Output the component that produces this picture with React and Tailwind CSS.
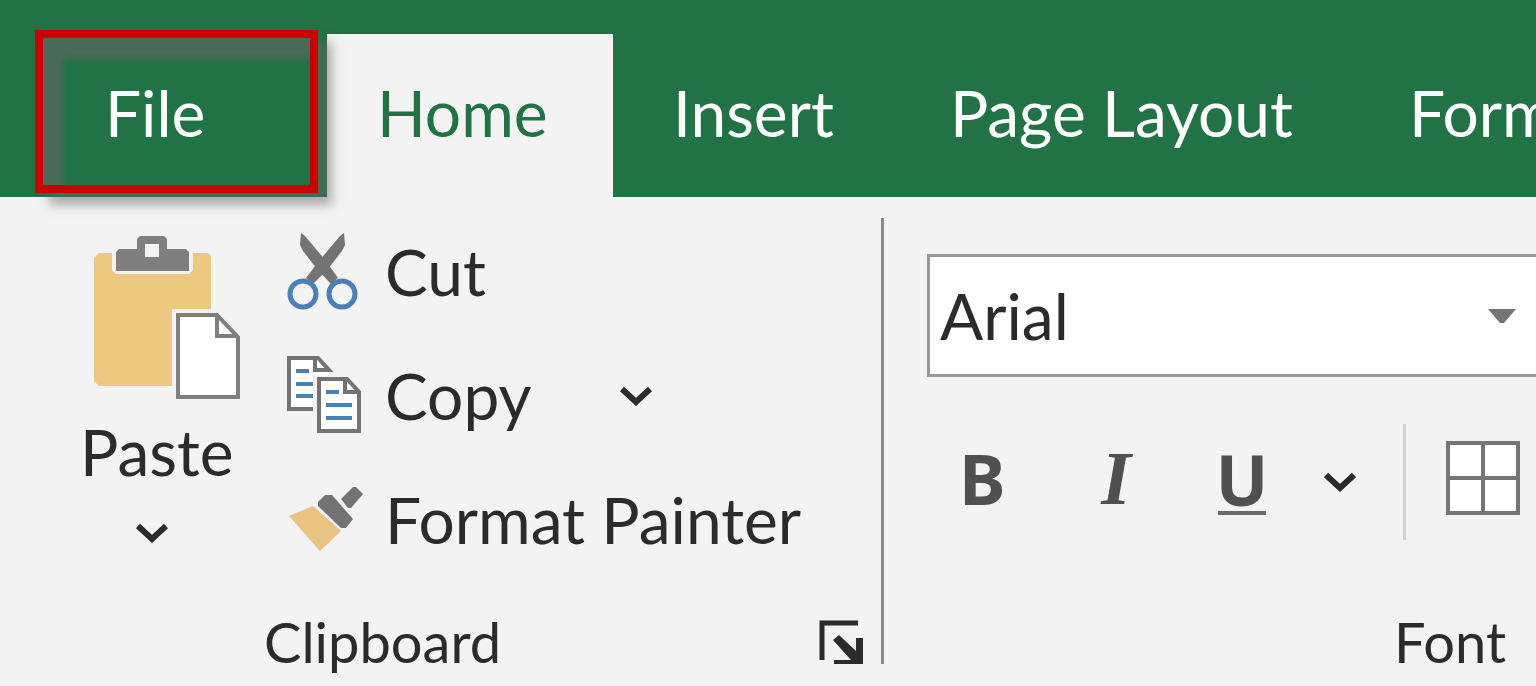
import { useState } from 'react';

const tabs = [
  { name: 'Home', pad: 'w-[286px] pl-[50px]' },
  { name: 'Insert', pad: 'pl-[60px] pr-14' },
  { name: 'Page Layout', pad: 'pl-[60px] pr-14' },
  { name: 'Formulas', pad: 'pl-[60px] pr-14' },
];

function Chevron() {
  return (
    <svg width="34" height="22" viewBox="0 0 34 22" fill="none" aria-hidden="true">
      <path d="M3 4 L17 17 L31 4" stroke="#2b2b2b" strokeWidth="6" />
    </svg>
  );
}

function PasteIcon() {
  return (
    <svg width="148" height="164" viewBox="0 0 148 164" aria-hidden="true">
      <path d="M5 17 H18 V34 L22 38 H95 L99 34 V17 H112 Q117 17 117 22 V73 H78 V150 H5 L0 145 V22 Z" fill="#edc87f" />
      <path fillRule="evenodd" d="M22 16 L25 13 H43 V3 L46 0 H70 L73 3 V13 H92 L95 16 V35 H22 Z M51 8 V21 H65 V8 Z" fill="#7f7f7f" />
      <path d="M84 79 H123 L144 101 V161 H84 Z" fill="#fff" stroke="#7f7f7f" strokeWidth="4" />
      <path d="M123 79 V100 H144" fill="none" stroke="#7f7f7f" strokeWidth="4" />
    </svg>
  );
}

function CutIcon() {
  return (
    <svg width="72" height="78" viewBox="0 0 72 78" aria-hidden="true">
      <path d="M14 0 L18 3 L39 28 L51 45 L44 51 L30 36 L16 18 L13 12 Z" fill="#737373" />
      <path d="M57 0 L53 3 L32 28 L19 45 L26 51 L41 36 L55 18 L58 12 Z" fill="#737373" />
      <circle cx="16" cy="61" r="13" fill="#f3f3f3" stroke="#4a80b8" strokeWidth="5" />
      <circle cx="55" cy="61" r="13" fill="#f3f3f3" stroke="#4a80b8" strokeWidth="5" />
    </svg>
  );
}

function CopyIcon() {
  return (
    <svg width="76" height="80" viewBox="0 0 76 80" aria-hidden="true">
      <path d="M2 2 H30 L42 14 V53 H2 Z" fill="#fff" />
      <path d="M26 53 H2 V2 H31 L42 14 H28 V2" fill="none" stroke="#737373" strokeWidth="4" />
      <path d="M9 15 H22 M9 28 H26 M9 40 H26" stroke="#4a80b8" strokeWidth="4" />
      <path d="M26 19 H62 L76 33 V79 H26 Z" fill="#f3f3f3" />
      <path d="M32 23 H60 L72 36 V75 H32 Z" fill="#fff" stroke="#737373" strokeWidth="4" />
      <path d="M58 23 V36 H72" fill="none" stroke="#737373" strokeWidth="4" />
      <path d="M39 36 H52 M39 49 H65 M39 62 H65" stroke="#4a80b8" strokeWidth="4" />
    </svg>
  );
}

function PainterIcon() {
  return (
    <svg width="78" height="68" viewBox="0 0 78 68" aria-hidden="true">
      <path d="M2 30 L26 20 L54 45 L33 65 Z" fill="#eac282" />
      <path d="M31 16 L38 9 H45 L66 33 L59 42 H54 L31 20 Z" fill="#737373" />
      <path d="M54 13 L66 1 H69 L76 8 L64 22 H61 Z" fill="#737373" />
    </svg>
  );
}

function LauncherIcon() {
  return (
    <svg width="44" height="44" viewBox="0 0 44 44" aria-hidden="true">
      <path d="M3 40 V3 H39" fill="none" stroke="#2b2b2b" strokeWidth="5" />
      <path d="M14 20 L20 15 L37 31 V18 H44 V44 H15 V40 H32 Z" fill="#2b2b2b" />
    </svg>
  );
}

function BordersIcon() {
  return (
    <svg width="74" height="74" viewBox="0 0 74 74" aria-hidden="true">
      <rect x="2" y="2" width="70" height="70" fill="#fff" stroke="#757575" strokeWidth="4" />
      <path d="M37 2 V72 M2 37 H72" stroke="#757575" strokeWidth="4" />
    </svg>
  );
}

function ClipboardGroup() {
  return (
    <section className="mt-[21px] flex h-[446px] w-[884px] shrink-0 flex-col border-r-[3px] border-[#8a8a8a]">
      <div className="flex">
        <button type="button" className="ml-[80px] mt-[18px] flex w-[160px] flex-col items-start">
          <span className="pl-[14px]"><PasteIcon /></span>
          <span className="mt-[14px] leading-[76px]">Paste</span>
          <span className="mt-8 pl-[55px]"><Chevron /></span>
        </button>
        <div className="ml-[47px] flex flex-col gap-4">
          <button type="button" className="flex h-[108px] items-center">
            <span className="w-[98px]"><CutIcon /></span>
            Cut
          </button>
          <div className="flex h-[108px] items-center">
            <button type="button" className="flex items-center">
              <span className="w-[98px]"><CopyIcon /></span>
              Copy
            </button>
            <button type="button" aria-label="Copy options" className="ml-[88px]">
              <Chevron />
            </button>
          </div>
          <button type="button" className="flex h-[108px] items-center">
            <span className="w-[98px]"><PainterIcon /></span>
            Format Painter
          </button>
        </div>
      </div>
      <div className="mt-auto flex h-11 items-center justify-between pl-[264px] pr-[18px]">
        <h2 className="text-[56px] leading-11">Clipboard</h2>
        <button type="button" aria-label="Clipboard settings"><LauncherIcon /></button>
      </div>
    </section>
  );
}

function FontGroup() {
  const [font, setFont] = useState('Arial');

  return (
    <section className="ml-[43px] mt-[21px] flex h-[446px] min-w-0 flex-1 flex-col">
      <div className="relative mt-9">
        <select
          aria-label="Font name"
          value={font}
          onChange={(e) => setFont(e.target.value)}
          className="h-[123px] w-full appearance-none border-[3px] border-r-0 border-[#979797] bg-white pl-[10px]"
        >
          <option>Arial</option>
          <option>Calibri</option>
          <option>Verdana</option>
        </select>
        <svg className="pointer-events-none absolute right-5 top-[55px]" width="28" height="14" viewBox="0 0 28 14" aria-hidden="true">
          <path d="M0 0 H28 L16 14 H12 Z" fill="#757575" />
        </svg>
      </div>
      <div className="mt-[47px] flex h-[116px] items-center text-[#505050]">
        <button type="button" aria-label="Bold" className="mb-2 ml-8 w-[46px] font-['Noto_Sans',sans-serif] text-[70px] font-bold">B</button>
        <button type="button" aria-label="Italic" className="mb-2 ml-[88px] w-[46px] font-['Liberation_Serif',serif] text-[76px] font-bold italic">I</button>
        <button type="button" aria-label="Underline" className="mb-0.5 ml-[79px] flex w-12 flex-col items-center border-b-4 border-[#6a6a6a] font-['Noto_Sans',sans-serif] text-[70px] font-bold leading-[64px]">U</button>
        <button type="button" aria-label="Underline options" className="ml-[57px]"><Chevron /></button>
        <span className="ml-[46px] h-full w-[3px] bg-[#d2d2d2]" />
        <button type="button" aria-label="Borders" className="mb-2 ml-10 shrink-0"><BordersIcon /></button>
      </div>
      <h2 className="mt-auto pr-[30px] text-right text-[56px] leading-11">Font</h2>
    </section>
  );
}

export default function App() {
  const [active, setActive] = useState('Home');

  return (
    <div className="min-h-screen overflow-hidden bg-[#f3f3f3] font-['Lato',sans-serif] text-[64px] leading-[76px] text-[#2b2b2b]">
      <nav className="flex h-[197px] items-stretch bg-[#217346] pt-[34px] text-white">
        <button type="button" className="relative z-10 w-[327px] shrink-0 pb-1.5 pl-[105px] text-left">
          File
          <span className="pointer-events-none absolute -top-1 left-[35px] h-[163px] w-[283px] border-8 border-[#cc0000] shadow-[14px_12px_10px_rgba(102,102,102,0.5),inset_20px_20px_6px_rgba(102,102,102,0.62)]" />
        </button>
        {tabs.map((tab) => (
          <button
            key={tab.name}
            type="button"
            onClick={() => setActive(tab.name)}
            className={`shrink-0 whitespace-nowrap pb-1.5 text-left ${tab.pad} ${active === tab.name ? 'bg-[#f3f3f3] text-[#217346]' : ''}`}
          >
            {tab.name}
          </button>
        ))}
      </nav>
      <main className="flex pb-[22px]">
        <ClipboardGroup />
        <FontGroup />
      </main>
    </div>
  );
}
